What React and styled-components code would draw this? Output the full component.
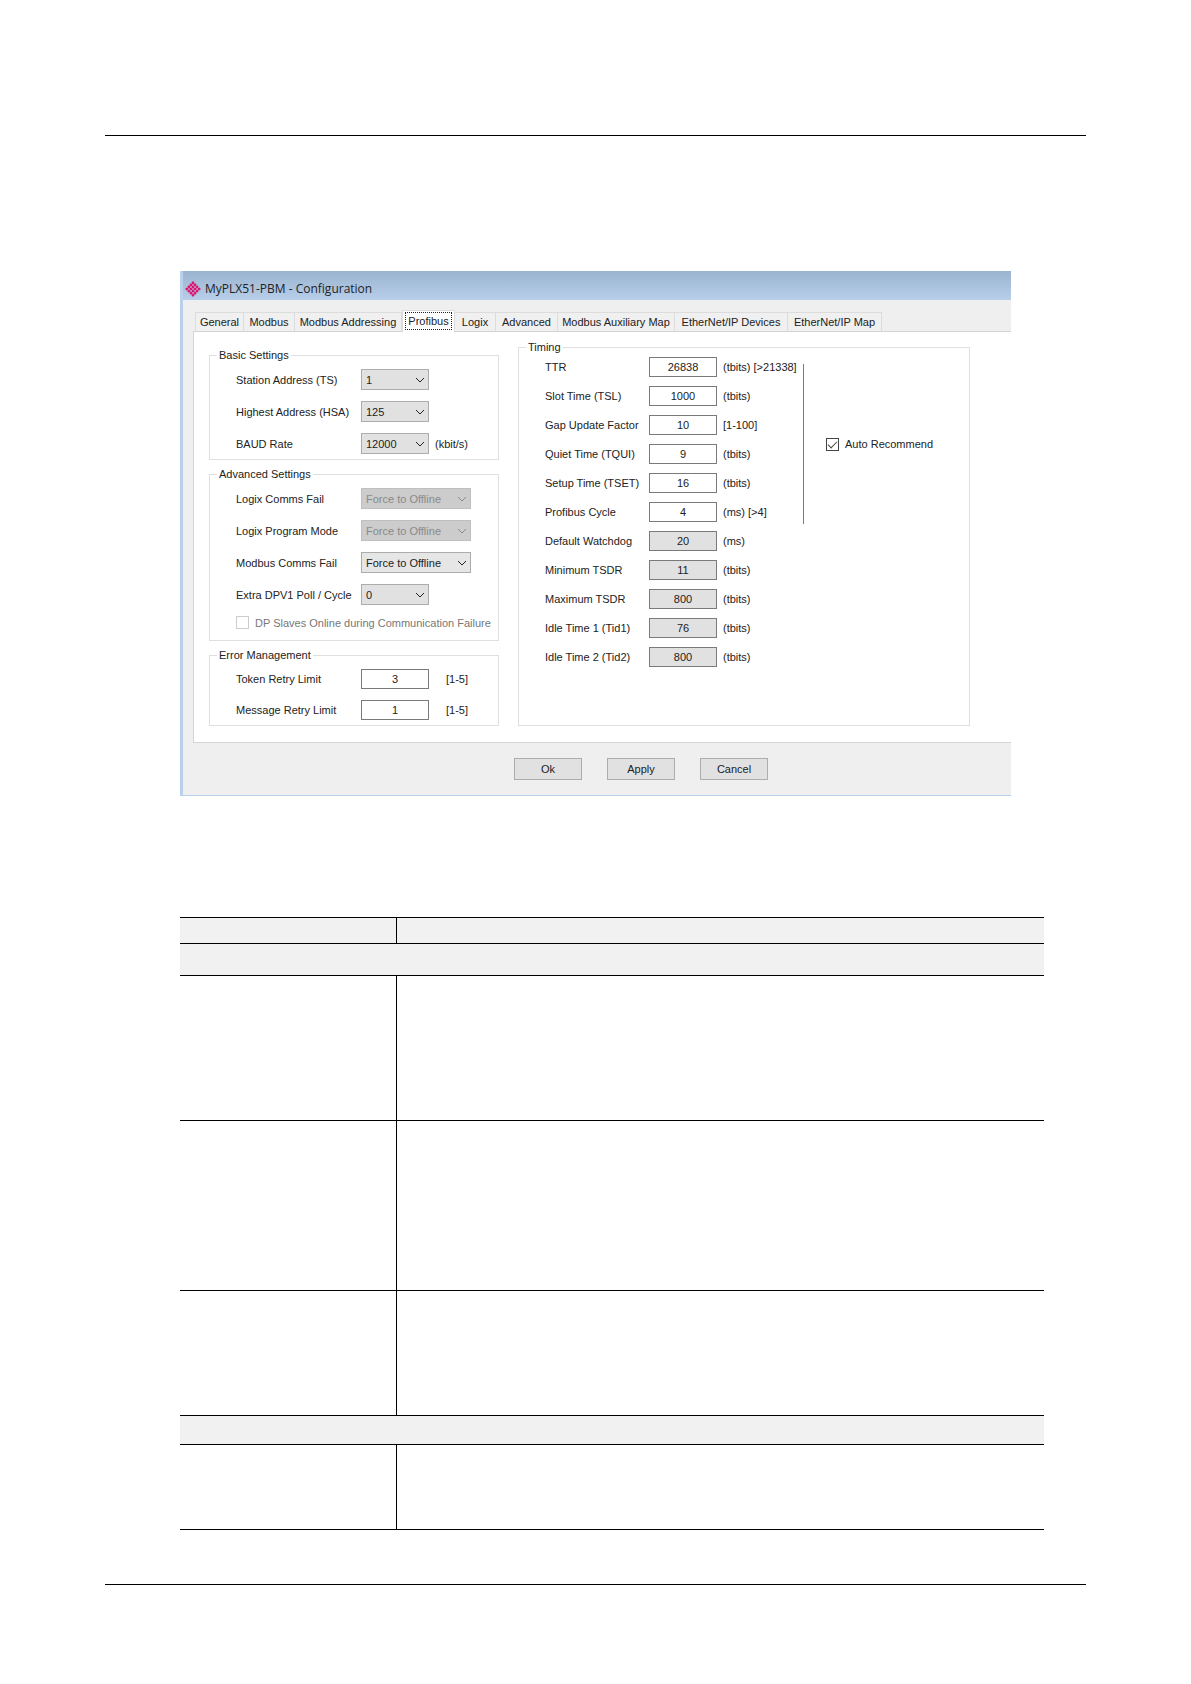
import { useState } from "react";
import styled, { createGlobalStyle } from "styled-components";

const TABS = [
    { name: "General", width: 49 },
    { name: "Modbus", width: 51 },
    { name: "Modbus Addressing", width: 107 },
    { name: "Profibus", width: 53 },
    { name: "Logix", width: 41 },
    { name: "Advanced", width: 62 },
    { name: "Modbus Auxiliary Map", width: 117 },
    { name: "EtherNet/IP Devices", width: 113 },
    { name: "EtherNet/IP Map", width: 94 },
];

const TIMING = [
    { id: "ttr", label: "TTR", value: "26838", hint: "(tbits) [>21338]" },
    { id: "tsl", label: "Slot Time (TSL)", value: "1000", hint: "(tbits)" },
    { id: "gap", label: "Gap Update Factor", value: "10", hint: "[1-100]" },
    { id: "tqui", label: "Quiet Time (TQUI)", value: "9", hint: "(tbits)" },
    { id: "tset", label: "Setup Time (TSET)", value: "16", hint: "(tbits)" },
    { id: "cycle", label: "Profibus Cycle", value: "4", hint: "(ms) [>4]" },
    { id: "watchdog", label: "Default Watchdog", value: "20", hint: "(ms)", readOnly: true },
    { id: "mintsdr", label: "Minimum TSDR", value: "11", hint: "(tbits)", readOnly: true },
    { id: "maxtsdr", label: "Maximum TSDR", value: "800", hint: "(tbits)", readOnly: true },
    { id: "tid1", label: "Idle Time 1 (Tid1)", value: "76", hint: "(tbits)", readOnly: true },
    { id: "tid2", label: "Idle Time 2 (Tid2)", value: "800", hint: "(tbits)", readOnly: true },
];

const Logo = () => {
    const cells = [];
    for (let row = 0; row < 4; row++) {
        for (let col = 0; col < 4; col++) {
            cells.push(<rect key={`${row}-${col}`} x={col * 2.9 - 5.6} y={row * 2.9 - 5.6} width="2.5" height="2.5" rx="0.6" />);
        }
    }
    return (
        <svg width="16" height="16" viewBox="-8 -8 16 16" fill="#e0106c" aria-hidden="true">
            <g transform="rotate(45)">{cells}</g>
        </svg>
    );
};

const SelectRow = ({ id, label, value, hint, wide, disabled, light }) => (
    <Row>
        <Label htmlFor={id}>{label}</Label>
        <SelectBox $wide={wide} $disabled={disabled}>
            <Select id={id} defaultValue={value} disabled={disabled} $light={light}>
                <option>{value}</option>
            </Select>
            <Chevron viewBox="0 0 10 6" aria-hidden="true">
                <path d="M1 1l4 4 4-4" />
            </Chevron>
        </SelectBox>
        {hint && <Hint>{hint}</Hint>}
    </Row>
);

const InputRow = ({ id, label, value, hint, readOnly, indent }) => (
    <Row>
        <Label htmlFor={id}>{label}</Label>
        <Input id={id} type="text" defaultValue={value} readOnly={readOnly} />
        <Hint $indent={indent}>{hint}</Hint>
    </Row>
);

const App = () => {
    const [tab, setTab] = useState("Profibus");
    const [auto, setAuto] = useState(true);

    return (
        <Page>
            <GlobalStyle />
            <Window>
                <TitleBar>
                    <Logo />
                    MyPLX51-PBM - Configuration
                </TitleBar>
                <Body>
                    <TabStrip role="tablist">
                        {TABS.map(({ name, width }) => (
                            <Tab
                                key={name}
                                type="button"
                                role="tab"
                                aria-selected={tab === name}
                                $active={tab === name}
                                $width={width}
                                onClick={() => setTab(name)}
                            >
                                <span>{name}</span>
                            </Tab>
                        ))}
                    </TabStrip>
                    <Panel>
                        <Column>
                            <Group>
                                <legend>Basic Settings</legend>
                                <Rows>
                                    <SelectRow id="ts" label="Station Address (TS)" value="1" />
                                    <SelectRow id="hsa" label="Highest Address (HSA)" value="125" />
                                    <SelectRow id="baud" label="BAUD Rate" value="12000" hint="(kbit/s)" />
                                </Rows>
                            </Group>
                            <Group>
                                <legend>Advanced Settings</legend>
                                <Rows>
                                    <SelectRow id="logixFail" label="Logix Comms Fail" value="Force to Offline" wide disabled />
                                    <SelectRow id="logixMode" label="Logix Program Mode" value="Force to Offline" wide disabled />
                                    <SelectRow id="modbusFail" label="Modbus Comms Fail" value="Force to Offline" wide light />
                                    <SelectRow id="dpv1" label="Extra DPV1 Poll / Cycle" value="0" />
                                    <CheckLabel $disabled>
                                        <Checkbox type="checkbox" disabled />
                                        DP Slaves Online during Communication Failure
                                    </CheckLabel>
                                </Rows>
                            </Group>
                            <Group>
                                <legend>Error Management</legend>
                                <Rows>
                                    <InputRow id="token" label="Token Retry Limit" value="3" hint="[1-5]" indent />
                                    <InputRow id="message" label="Message Retry Limit" value="1" hint="[1-5]" indent />
                                </Rows>
                            </Group>
                        </Column>
                        <Group>
                            <legend>Timing</legend>
                            <TimingArea>
                                <TimingRows>
                                    {TIMING.map((item) => (
                                        <InputRow key={item.id} {...item} />
                                    ))}
                                </TimingRows>
                                <AutoArea>
                                    <CheckLabel>
                                        <Checkbox type="checkbox" checked={auto} onChange={(e) => setAuto(e.target.checked)} />
                                        Auto Recommend
                                    </CheckLabel>
                                </AutoArea>
                            </TimingArea>
                        </Group>
                    </Panel>
                    <Footer>
                        <Button type="button">Ok</Button>
                        <Button type="button">Apply</Button>
                        <Button type="button">Cancel</Button>
                    </Footer>
                </Body>
            </Window>

            <Table>
                <thead>
                    <TableRow $height={26} $shaded>
                        <th />
                        <th />
                    </TableRow>
                </thead>
                <tbody>
                    <TableRow $height={32} $shaded>
                        <td colSpan={2} />
                    </TableRow>
                    <TableRow $height={145}>
                        <td />
                        <td />
                    </TableRow>
                    <TableRow $height={170}>
                        <td />
                        <td />
                    </TableRow>
                    <TableRow $height={125}>
                        <td />
                        <td />
                    </TableRow>
                    <TableRow $height={29} $shaded>
                        <td colSpan={2} />
                    </TableRow>
                    <TableRow $height={85}>
                        <td />
                        <td />
                    </TableRow>
                </tbody>
            </Table>
        </Page>
    );
};

const GlobalStyle = createGlobalStyle`
    *, *::before, *::after {
        box-sizing: border-box;
    }
    body {
        margin: 0;
        background: #fff;
        color: #222;
        font-family: "Liberation Sans", Arial, sans-serif;
        font-size: 11px;
        line-height: 16px;
    }
    button, input, select {
        font: inherit;
        color: inherit;
    }
`;

const Page = styled.main`
    margin: 135px 105px 99px;
    padding: 135px 0 54px;
    border-top: 1px solid #000;
    border-bottom: 1px solid #000;
`;

const Window = styled.section`
    margin: 0 75px 121px;
    border-left: 3px solid #b9d1ea;
    border-bottom: 1px solid #b9d1ea;
    background: #efefef;
`;

const TitleBar = styled.header`
    display: flex;
    align-items: center;
    gap: 4px;
    height: 29px;
    padding: 6px 2px 0;
    background: linear-gradient(#9ab3d0, #b7cfe9);
    font-family: "Open Sans", "Noto Sans", sans-serif;
    font-size: 12px;
    white-space: nowrap;
`;

const Body = styled.div`
    padding-left: 10px;
`;

const TabStrip = styled.div`
    display: flex;
    align-items: flex-end;
    padding: 10px 2px 0;
`;

const Tab = styled.button`
    width: ${(props) => props.$width}px;
    height: ${(props) => (props.$active ? 22 : 19)}px;
    margin-bottom: ${(props) => (props.$active ? -1 : 0)}px;
    padding: ${(props) => (props.$active ? "0 3px 2px" : 0)};
    border: 1px solid #dcdcdc;
    border-bottom: none;
    border-left-width: ${(props) => (props.$active ? 1 : 0)}px;
    background: ${(props) => (props.$active ? "#fff" : "#f0f0f0")};
    white-space: nowrap;
    z-index: ${(props) => (props.$active ? 1 : 0)};

    &:first-child {
        border-left-width: 1px;
    }

    span {
        display: block;
        outline: ${(props) => (props.$active ? "1px dotted #222" : "none")};
    }
`;

const Panel = styled.div`
    display: grid;
    grid-template-columns: minmax(0, 290fr) minmax(0, 452fr);
    gap: 19px;
    padding: 7px 41px 16px 15px;
    border: 1px solid #d4d4d4;
    border-right: none;
    background: #fff;
`;

const Column = styled.div`
    padding-top: 8px;
`;

const Group = styled.fieldset`
    min-width: 0;
    margin: 0;
    padding: 0 0 5px 26px;
    border: 1px solid #dfdfdf;

    & + & {
        margin-top: 6px;
    }

    legend {
        height: 16px;
        margin-left: -19px;
        padding: 0 2px;
    }
`;

const Rows = styled.div`
    display: grid;
    gap: 11px;
    padding-top: 6px;
`;

const Row = styled.div`
    display: flex;
    align-items: center;
    gap: 6px;
    white-space: nowrap;
`;

const Label = styled.label`
    flex: none;
    width: 119px;
`;

const Hint = styled.span`
    padding-left: ${(props) => (props.$indent ? 11 : 0)}px;
`;

const SelectBox = styled.div`
    position: relative;
    width: ${(props) => (props.$wide ? 110 : 68)}px;
    height: 21px;
    color: ${(props) => (props.$disabled ? "#8a8a8a" : "#222")};
`;

const Select = styled.select`
    appearance: none;
    width: 100%;
    height: 100%;
    padding: 0 16px 0 4px;
    border: 1px solid #acacac;
    border-radius: 0;
    background: ${(props) => (props.$light ? "#e6e6e6" : "#e1e1e1")};

    &:disabled {
        border-color: #bfbfbf;
        background: #cccccc;
        opacity: 1;
    }
`;

const Chevron = styled.svg`
    position: absolute;
    top: 8px;
    right: 4px;
    width: 10px;
    height: 6px;
    fill: none;
    stroke: currentColor;
    pointer-events: none;
`;

const Input = styled.input`
    width: 68px;
    height: 20px;
    padding: 0;
    border: 1px solid #7a7a7a;
    background: #fff;
    text-align: center;

    &:read-only {
        background: #e1e1e1;
    }
`;

const CheckLabel = styled.label`
    display: flex;
    align-items: center;
    gap: 6px;
    height: 13px;
    white-space: nowrap;
    color: ${(props) => (props.$disabled ? "#777" : "#222")};

    ${Rows} & {
        margin-bottom: 6px;
    }
`;

const Checkbox = styled.input`
    appearance: none;
    width: 13px;
    height: 13px;
    margin: 0;
    border: 1px solid #444;
    background: #fff;

    &:disabled {
        border-color: #ccc;
    }

    &:checked::before {
        content: "";
        display: block;
        width: 9px;
        height: 5px;
        margin: 2px 1px;
        border: solid #444;
        border-width: 0 0 1px 1px;
        transform: rotate(-45deg);
    }
`;

const TimingArea = styled.div`
    display: flex;
`;

const TimingRows = styled.div`
    display: grid;
    gap: 9px;
    flex: 0 0 258px;
    padding-top: 2px;

    ${Label} {
        width: 98px;
    }
`;

const AutoArea = styled.div`
    display: flex;
    align-items: center;
    height: 160px;
    margin-top: 9px;
    padding-left: 22px;
    border-left: 1px solid #7a7a7a;
`;

const Footer = styled.footer`
    display: flex;
    gap: 25px;
    padding: 15px 0 15px 321px;
`;

const Button = styled.button`
    width: 68px;
    height: 22px;
    padding: 0;
    border: 1px solid #adadad;
    background: #e1e1e1;
`;

const Table = styled.table`
    width: calc(100% - 117px);
    margin-left: 75px;
    border-collapse: collapse;
    table-layout: fixed;

    th:first-child {
        width: 25%;
    }
`;

const TableRow = styled.tr`
    height: ${(props) => props.$height}px;
    border: solid #000;
    border-width: 1px 0;
    background: ${(props) => (props.$shaded ? "#f1f1f1" : "#fff")};

    td, th {
        padding: 0;
    }

    td + td, th + th {
        border-left: 1px solid #000;
    }
`;

export default App;
